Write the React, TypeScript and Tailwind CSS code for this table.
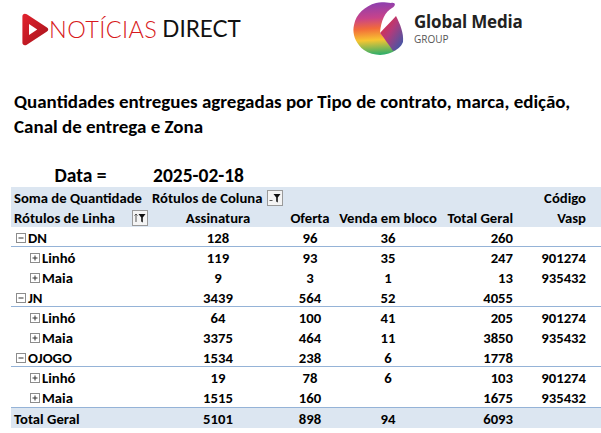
import React from "react";

const rows = [
	{ label: "DN", level: 0, a: "128", o: "96", v: "36", t: "260", c: "" },
	{ label: "Linhó", level: 1, a: "119", o: "93", v: "35", t: "247", c: "901274" },
	{ label: "Maia", level: 1, a: "9", o: "3", v: "1", t: "13", c: "935432" },
	{ label: "JN", level: 0, a: "3439", o: "564", v: "52", t: "4055", c: "" },
	{ label: "Linhó", level: 1, a: "64", o: "100", v: "41", t: "205", c: "901274" },
	{ label: "Maia", level: 1, a: "3375", o: "464", v: "11", t: "3850", c: "935432" },
	{ label: "OJOGO", level: 0, a: "1534", o: "238", v: "6", t: "1778", c: "" },
	{ label: "Linhó", level: 1, a: "19", o: "78", v: "6", t: "103", c: "901274" },
	{ label: "Maia", level: 1, a: "1515", o: "160", v: "", t: "1675", c: "935432" },
];

const grid = "grid grid-cols-[139px_136px_48px_108px_74px_73px]";

const ExpandBox = ({ open }: { open: boolean }) => (
	<svg width="10" height="10" viewBox="0 0 10 10" className="shrink-0">
		<rect x="0.5" y="0.5" width="9" height="9" fill="#fff" stroke="#8c8c8c" />
		<line x1="2.5" y1="5" x2="7.5" y2="5" stroke="#333" />
		{!open && <line x1="5" y1="2.5" x2="5" y2="7.5" stroke="#333" />}
	</svg>
);

const FilterButton = ({ sort }: { sort?: boolean }) => (
	<svg width="16" height="16" viewBox="0 0 16 16" className="shrink-0">
		<rect x="0.5" y="0.5" width="15" height="15" fill="#f4f4f4" stroke="#9a9a9a" />
		{sort ? (
			<path d="M4 4v8M2.5 5.5L4 4l1.5 1.5" stroke="#555" fill="none" />
		) : (
			<path d="M2.5 10.5h3" stroke="#555" />
		)}
		<path d="M6.5 4h7l-2.7 3.5v5l-1.6 -1v-4z" fill="#111" />
	</svg>
);

const NoticiasLogo = () => (
	<div className="flex items-center">
		<svg width="29" height="33" viewBox="0 0 26 30" className="shrink-0">
			<defs>
				<linearGradient id="nd" x1="0" y1="0" x2="1" y2="1">
					<stop offset="0" stopColor="#e2232e" />
					<stop offset="1" stopColor="#a5121b" />
				</linearGradient>
			</defs>
			<path
				fillRule="evenodd"
				fill="url(#nd)"
				d="M2 3C2 1 4 0 6 1.2L24 13C26 14 26 16 24 17L6 28.8C4 30 2 29 2 27Z M8 10L8 20L15.5 15Z"
			/>
		</svg>
		<span className="ml-[0px] text-[23.5px] leading-none font-light tracking-[0.4px] text-[#d71920] [font-family:'Lato','Liberation_Sans',sans-serif]">
			NOTÍCIAS
		</span>
		<span className="ml-[5px] text-[22.5px] leading-none font-normal text-[#111] [font-family:'Lato','Liberation_Sans',sans-serif]">
			DIRECT
		</span>
	</div>
);

const GlobalMediaLogo = () => (
	<div className="flex items-center">
		<svg width="52" height="56" viewBox="0 0 52 56" className="shrink-0">
			<defs>
				<linearGradient id="gm1" x1="0.4" y1="0" x2="0.45" y2="1">
					<stop offset="0" stopColor="#8a3fb0" />
					<stop offset="0.3" stopColor="#c8438a" />
					<stop offset="0.5" stopColor="#f26b3a" />
					<stop offset="0.72" stopColor="#f7c531" />
					<stop offset="1" stopColor="#2fae6a" />
				</linearGradient>
				<linearGradient id="gm2" x1="0" y1="0" x2="1" y2="1">
					<stop offset="0" stopColor="#ee2b2b" />
					<stop offset="0.45" stopColor="#b43a7a" />
					<stop offset="1" stopColor="#2a5db0" />
				</linearGradient>
			</defs>
			<path
				fill="url(#gm1)"
				d="M39 3C44 2 44 6 40 8C33 12 29 20 28 33L34 40L44 50C36 56 22 57 12 50C3 43 0 33 2 25C4 14 13 6 24 3C30 1.5 35 3 39 3Z"
			/>
			<path fill="url(#gm2)" d="M28 33C33 27 39 22 44 16C48 24 52 33 51 42C49 47 45 50 41 51C37 45 32 38 28 33Z" />
		</svg>
		<div className="ml-[10px] flex flex-col [font-family:'Open_Sans','Lato',sans-serif]">
			<span className="text-[17px] leading-[20px] font-bold text-[#222] tracking-[-0.2px]">Global Media</span>
			<span className="text-[10px] leading-[12px] text-[#555] mt-[1px]">GROUP</span>
		</div>
	</div>
);

export default function App() {
	return (
		<div className="w-[601px] h-[433px] bg-white overflow-hidden text-black [font-family:'Carlito','Lato',sans-serif]">
			<div className="flex items-start h-[62px]">
				<div className="w-[352px] shrink-0 pl-[20px] pt-[13px]">
					<NoticiasLogo />
				</div>
				<div>
					<GlobalMediaLogo />
				</div>
			</div>

			<div className="mt-[27px] ml-[14px] text-[19px] leading-[25px] font-bold">
				<div className="whitespace-nowrap">Quantidades entregues agregadas por Tipo de contrato, marca, edição,</div>
				<div>Canal de entrega e Zona</div>
			</div>

			<div className="ml-[11px] mt-[22px] text-[14.7px] font-bold">
				<div className={`${grid} h-[26px] items-center text-[19.5px]`}>
					<div className="text-center">Data =</div>
					<div className="pl-[3px] whitespace-nowrap">2025-02-18</div>
				</div>

				<div className="bg-[#dce6f1]">
					<div className={`${grid} h-[20px] items-center`}>
						<div className="pl-[3px] whitespace-nowrap">Soma de Quantidade</div>
						<div className="pl-[2px] flex items-center justify-between pr-[3px]">
							<span className="whitespace-nowrap">Rótulos de Coluna</span>
							<FilterButton />
						</div>
						<div />
						<div />
						<div />
						<div className="text-right pr-[3px]">Código</div>
					</div>
					<div className={`${grid} h-[20px] items-center`}>
						<div className="pl-[3px] flex items-center justify-between pr-[2px]">
							<span className="whitespace-nowrap">Rótulos de Linha</span>
							<FilterButton sort />
						</div>
						<div className="text-center">Assinatura</div>
						<div className="text-center">Oferta</div>
						<div className="text-center whitespace-nowrap">Venda em bloco</div>
						<div className="text-right pr-[3px] whitespace-nowrap">Total Geral</div>
						<div className="text-right pr-[3px]">Vasp</div>
					</div>
				</div>

				{rows.map((r, i) => (
					<div
						key={i}
						className={`${grid} h-[20px] items-center ${
							r.level === 0 ? "border-b border-[#95b3d7]" : ""
						}`}
					>
						<div className={`flex items-center gap-[2px] ${r.level === 0 ? "pl-[5px]" : "pl-[19px]"}`}>
							<ExpandBox open={r.level === 0} />
							<span>{r.label}</span>
						</div>
						<div className="text-center">{r.a}</div>
						<div className="text-center">{r.o}</div>
						<div className="text-center">{r.v}</div>
						<div className="text-right pr-[3px]">{r.t}</div>
						<div className="text-right pr-[3px]">{r.c}</div>
					</div>
				))}

				<div className={`${grid} h-[21px] items-center bg-[#dce6f1] border-t border-[#95b3d7]`}>
					<div className="pl-[3px]">Total Geral</div>
					<div className="text-center">5101</div>
					<div className="text-center">898</div>
					<div className="text-center">94</div>
					<div className="text-right pr-[3px]">6093</div>
					<div />
				</div>
			</div>
		</div>
	);
}
